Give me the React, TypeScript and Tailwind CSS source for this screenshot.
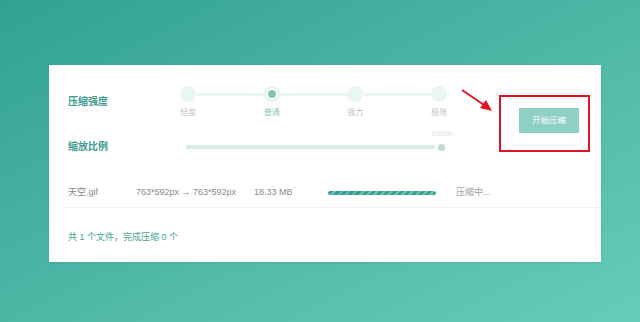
import React from "react";

const steps = [
  { label: "轻度", active: false },
  { label: "普通", active: true },
  { label: "强力", active: false },
  { label: "极限", active: false },
];

export default function App() {
  const font = { fontFamily: '"Liberation Sans", "Noto Sans CJK SC", sans-serif' };
  return (
    <div
      className="w-[640px] h-[322px] overflow-hidden bg-linear-to-br from-[#31a292] to-[#66ccba] pt-[65px] pl-[49px]"
      style={font}
    >
      <div className="relative w-[552px] h-[197px] bg-white shadow-[0_1px_3px_rgba(0,0,0,0.08)] flex flex-col">
        {/* top section */}
        <div className="flex pt-[21px] pl-[19px] pr-[11px]">
          <div className="flex flex-col w-[379px]">
            {/* strength row */}
            <div className="flex items-center h-[32px]">
              <div className="w-[112px] text-[10px] font-semibold text-[#3d9c90] leading-none">压缩强度</div>
              <div className="flex items-start w-[267px] h-[32px]">
                {steps.map((s, i) => (
                  <React.Fragment key={s.label}>
                    {i > 0 && <div className="flex-1 h-[3px] mt-[6.5px] bg-[#e8f5f2]" />}
                    <div className="flex flex-col items-center w-[16px]">
                      {s.active ? (
                        <div className="w-[16px] h-[16px] rounded-full bg-white border-[2px] border-[#e3f3ef] flex items-center justify-center">
                          <div className="w-[8px] h-[8px] rounded-full bg-[#7fc7b9]" />
                        </div>
                      ) : (
                        <div className="w-[16px] h-[16px] rounded-full bg-[#e9f6f3]" />
                      )}
                      <div
                        className={`mt-[6px] whitespace-nowrap text-[8px] leading-[10px] ${
                          s.active ? "text-[#8ccabe]" : "text-[#c4c4c4]"
                        }`}
                      >
                        {s.label}
                      </div>
                    </div>
                  </React.Fragment>
                ))}
              </div>
            </div>
            {/* scale row */}
            <div className="flex items-center h-[28px] mt-[15px]">
              <div className="w-[118px] text-[10px] font-semibold text-[#3d9c90] leading-none">缩放比例</div>
              <div className="flex items-center w-[261px] relative">
                <div className="w-[249px] h-[4px] rounded-full bg-[#d6ece8]" />
                <div className="relative ml-[3px] w-[7px] h-[7px] rounded-full bg-[#bcdcd6]">
                  <div className="absolute left-1/2 -translate-x-1/2 -top-[15px] text-[8px] leading-[10px] text-[#dcdcdc] whitespace-nowrap">
                    100%
                  </div>
                </div>
              </div>
            </div>
          </div>
          <div className="ml-auto mt-[9px] w-[91px] h-[57px] border-[2px] border-[#e3141f] pl-[18px] pt-[11px]">
            <div className="w-[60px] h-[25px] bg-[#8fd0c4] flex items-center justify-center text-white text-[8.5px] leading-none">
              开始压缩
            </div>
          </div>
        </div>

        {/* arrow */}
        <svg className="absolute left-[410px] top-[23px]" width="36" height="26" viewBox="0 0 36 26">
          <line x1="3" y1="2" x2="28" y2="19" stroke="#e3141f" strokeWidth="2" />
          <polygon points="33,23 21,20 27,12" fill="#e3141f" />
        </svg>

        {/* file row */}
        <div className="mt-[17px] ml-[12px] h-[30px] border-b border-[#f3f3f3] flex items-center pl-[7px] text-[9px] text-[#8a8a8a] leading-none">
          <div className="w-[68px]">天空.gif</div>
          <div className="w-[118px]">763*592px → 763*592px</div>
          <div className="w-[74px]">18.33 MB</div>
          <div className="w-[108px] h-[4px] rounded-full bg-[repeating-linear-gradient(-45deg,#33a292_0px,#33a292_3px,#6ac3b6_3px,#6ac3b6_5px)]" />
          <div className="ml-[20px] text-[#a0a0a0]">压缩中...</div>
        </div>

        {/* footer */}
        <div className="mt-[25px] pl-[19px] text-[9px] leading-none text-[#4aa396]">共 1 个文件，完成压缩 0 个</div>
      </div>
    </div>
  );
}
